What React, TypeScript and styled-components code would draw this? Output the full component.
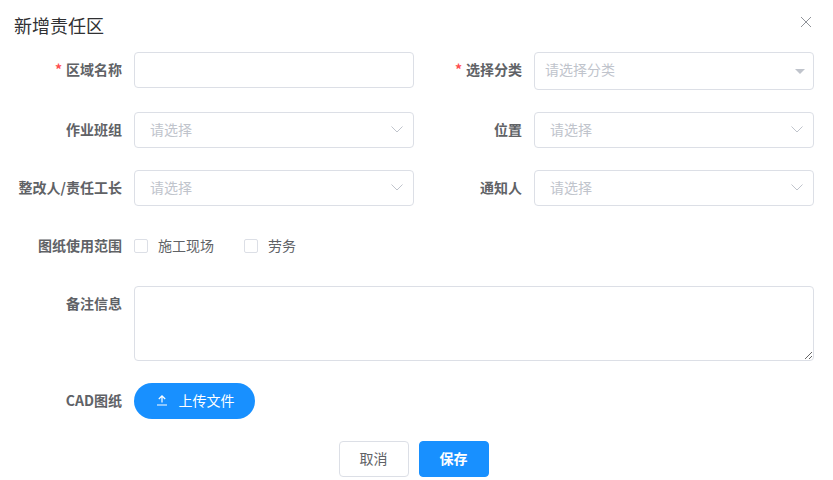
import React from "react";
import styled, { createGlobalStyle } from "styled-components";

const GlobalStyle = createGlobalStyle`
  html, body {
    margin: 0;
    padding: 0;
    background: #fff;
    font-family: "Noto Sans CJK SC", "Liberation Sans", sans-serif;
  }
  * {
    box-sizing: border-box;
  }
`;

function Chevron() {
  return (
    <ChevronIcon width="14" height="14" viewBox="0 0 14 14" fill="none">
      <path d="M1.5 4.5 7 10l5.5-5.5" stroke="#c0c4cc" strokeWidth="1" />
    </ChevronIcon>
  );
}

function SelectBox({ placeholder = "请选择" }: { placeholder?: string }) {
  return (
    <SelectWrap>
      <SelectInput readOnly placeholder={placeholder} />
      <Chevron />
    </SelectWrap>
  );
}

export default function App() {
  return (
    <>
      <GlobalStyle />
      <Dialog>
        <DialogHeader>
          <Title>新增责任区</Title>
          <CloseButton aria-label="close">
            <svg width="12" height="12" viewBox="0 0 12 12" fill="none">
              <path d="M1 1l10 10M11 1 1 11" stroke="#909399" strokeWidth="1" />
            </svg>
          </CloseButton>
        </DialogHeader>

        <FormGrid>
          <Row $mb={24}>
            <FormItem>
              <Label $required>区域名称</Label>
              <TextInput />
            </FormItem>
            <FormItem>
              <Label $required>选择分类</Label>
              <PlainSelect>
                <PlainInput readOnly placeholder="请选择分类" />
                <Caret />
              </PlainSelect>
            </FormItem>
          </Row>
          <Row $mb={22}>
            <FormItem>
              <Label>作业班组</Label>
              <SelectBox />
            </FormItem>
            <FormItem>
              <Label>位置</Label>
              <SelectBox />
            </FormItem>
          </Row>
          <Row $mb={22}>
            <FormItem>
              <Label>整改人/责任工长</Label>
              <SelectBox />
            </FormItem>
            <FormItem>
              <Label>通知人</Label>
              <SelectBox />
            </FormItem>
          </Row>
          <WideItem $mb={22}>
            <Label>图纸使用范围</Label>
            <CheckGroup>
              <CheckLabel>
                <CheckBox />
                <CheckText>施工现场</CheckText>
              </CheckLabel>
              <CheckLabel>
                <CheckBox />
                <CheckText>劳务</CheckText>
              </CheckLabel>
            </CheckGroup>
          </WideItem>
          <WideItem $mb={22}>
            <Label>备注信息</Label>
            <Notes />
          </WideItem>
          <WideItem $mb={22}>
            <Label>CAD图纸</Label>
            <UploadButton>
              <svg width="14" height="14" viewBox="0 0 14 14" fill="none">
                <path d="M2 12h10M7 9.5V3M3.8 6 7 2.8 10.2 6" stroke="#fff" strokeWidth="1.2" />
              </svg>
              上传文件
            </UploadButton>
          </WideItem>
        </FormGrid>

        <Footer>
          <CancelButton>取消</CancelButton>
          <SaveButton>保存</SaveButton>
        </Footer>
      </Dialog>
    </>
  );
}

const Dialog = styled.div`
  width: 833px;
  height: 480px;
  padding: 0 14px;
  background: #fff;
  overflow: hidden;
`;

const DialogHeader = styled.div`
  height: 52px;
  display: flex;
  align-items: flex-start;
  justify-content: space-between;
  padding-top: 12px;
`;

const Title = styled.div`
  font-size: 18px;
  line-height: 26px;
  color: #303133;
`;

const CloseButton = styled.button`
  width: 12px;
  height: 12px;
  margin: 4px 7px 0 0;
  padding: 0;
  border: none;
  background: none;
  display: flex;
`;

const FormGrid = styled.div`
  display: flex;
  flex-direction: column;
`;

const Row = styled.div<{ $mb: number }>`
  display: grid;
  grid-template-columns: 400px 400px;
  margin-bottom: ${(p) => p.$mb}px;
`;

const FormItem = styled.div`
  display: flex;
  align-items: center;
  height: 36px;
`;

const WideItem = styled.div<{ $mb: number }>`
  display: flex;
  align-items: flex-start;
  margin-bottom: ${(p) => p.$mb}px;
  min-height: 36px;
`;

const Label = styled.label<{ $required?: boolean }>`
  flex: none;
  width: 108px;
  margin-right: 12px;
  height: 36px;
  line-height: 35px;
  text-align: right;
  font-size: 14px;
  font-weight: 700;
  color: #606266;
  white-space: nowrap;

  &::before {
    content: ${(p) => (p.$required ? '"*"' : "none")};
    color: #ff4d4f;
    margin-right: 4px;
  }
`;

const TextInput = styled.input`
  width: 280px;
  height: 36px;
  border: 1px solid #dcdfe6;
  border-radius: 4px;
  outline: none;
  background: #fff;
`;

const SelectWrap = styled.div`
  position: relative;
  width: 280px;
  height: 36px;
`;

const SelectInput = styled.input`
  width: 100%;
  height: 100%;
  padding: 0 30px 2px 15px;
  border: 1px solid #dcdfe6;
  border-radius: 4px;
  outline: none;
  font-family: inherit;
  font-size: 14px;
  background: #fff;

  &::placeholder {
    color: #c0c4cc;
    opacity: 1;
  }
`;

const ChevronIcon = styled.svg`
  position: absolute;
  right: 10px;
  top: 10px;
`;

const PlainSelect = styled.div`
  position: relative;
  width: 280px;
  height: 38px;
  margin-top: 2px;
`;

const PlainInput = styled(SelectInput)`
  padding: 0 30px 4px 10px;
`;

const Caret = styled.span`
  position: absolute;
  right: 9px;
  top: 17px;
  width: 0;
  height: 0;
  border-left: 5px solid transparent;
  border-right: 5px solid transparent;
  border-top: 5px solid #c0c4cc;
`;

const CheckGroup = styled.div`
  display: flex;
  align-items: center;
  height: 36px;
  gap: 30px;
`;

const CheckLabel = styled.label`
  display: flex;
  align-items: center;
  gap: 10px;
  font-size: 14px;
  line-height: 20px;
  color: #606266;
`;

const CheckText = styled.span`
  margin-top: -2px;
`;

const CheckBox = styled.span`
  width: 14px;
  height: 14px;
  border: 1px solid #dcdfe6;
  border-radius: 2px;
  background: #fff;
`;

const Notes = styled.textarea`
  display: block;
  width: 680px;
  height: 75px;
  border: 1px solid #dcdfe6;
  border-radius: 4px;
  outline: none;
  background: #fff;
`;

const UploadButton = styled.button`
  width: 121px;
  height: 36px;
  padding: 0 0 2px;
  border: none;
  border-radius: 18px;
  background: #1890ff;
  color: #fff;
  font-family: inherit;
  font-size: 14px;
  display: flex;
  align-items: center;
  justify-content: center;
  gap: 10px;
`;

const Footer = styled.div`
  display: flex;
  justify-content: center;
  gap: 10px;
  padding-right: 6px;
`;

const CancelButton = styled.button`
  width: 70px;
  height: 36px;
  padding: 0 0 2px;
  border: 1px solid #dcdfe6;
  border-radius: 4px;
  background: #fff;
  color: #606266;
  font-family: inherit;
  font-size: 14px;
`;

const SaveButton = styled(CancelButton)`
  border-color: #1890ff;
  background: #1890ff;
  color: #fff;
  font-weight: 700;
`;
